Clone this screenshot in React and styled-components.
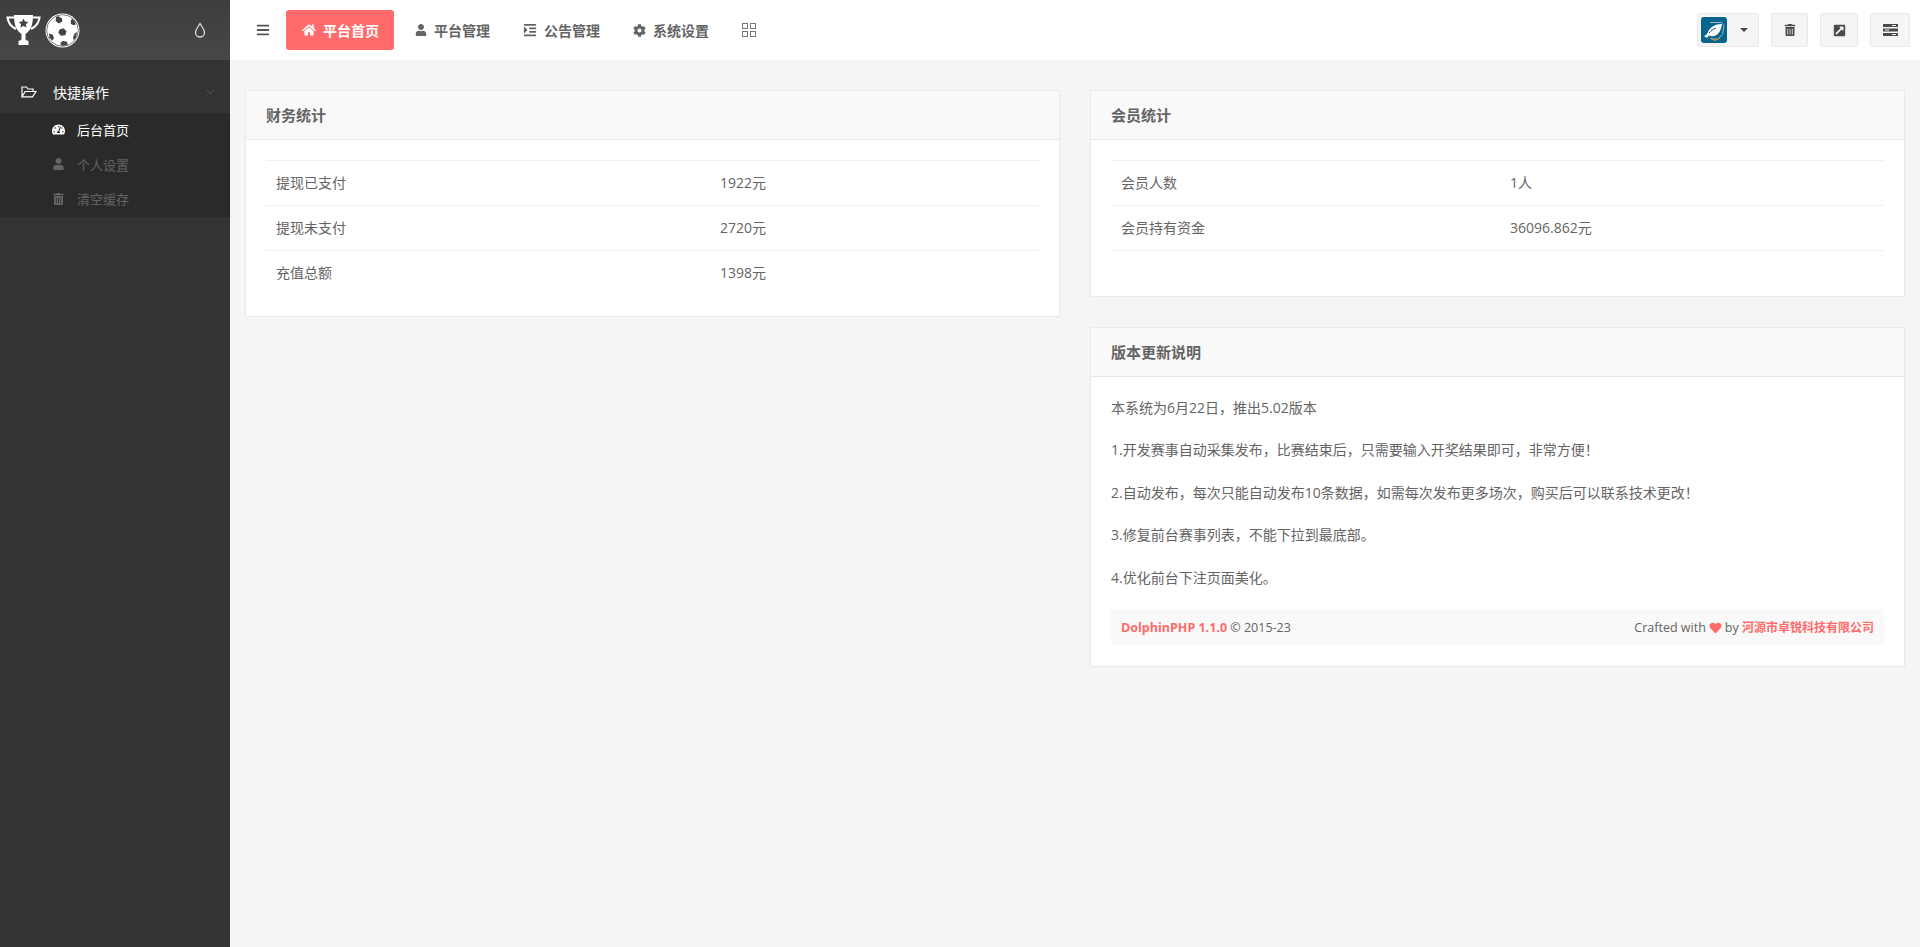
import React from "react";
import styled, { createGlobalStyle } from "styled-components";
import {
  FaBars,
  FaCog,
  FaExternalLinkSquareAlt,
  FaHeart,
  FaHome,
  FaIndent,
  FaTachometerAlt,
  FaTrashAlt,
  FaUser,
} from "react-icons/fa";

const GlobalStyle = createGlobalStyle`
  html, body {
    margin: 0;
    padding: 0;
    height: 100%;
    background: #f5f5f5;
    color: #646464;
    font-family: "Open Sans", "Noto Sans CJK SC", sans-serif;
    font-size: 14px;
  }
  * { box-sizing: border-box; }
`;

const Page = styled.div`
  display: flex;
  min-height: 947px;
`;

const Sidebar = styled.aside`
  width: 230px;
  flex-shrink: 0;
  background: #333333;
`;

const Brand = styled.div`
  display: flex;
  align-items: center;
  justify-content: space-between;
  height: 60px;
  padding: 0 23px 0 6px;
  background: linear-gradient(to bottom, #3e3e3e, #474747);
`;

const Logo = styled.div`
  display: flex;
  align-items: center;
  gap: 4px;
`;

const MenuHead = styled.div`
  display: flex;
  align-items: center;
  height: 53px;
  padding: 10px 15px 0 21px;
  color: #ffffff;
  font-size: 14px;
  svg:first-child {
    margin-right: 16px;
  }
`;

const MenuText = styled.span`
  flex: 1;
`;

const SubMenu = styled.div`
  background: #2a2a2a;
`;

const SubItem = styled.div`
  display: flex;
  align-items: center;
  height: 34.7px;
  padding-left: 52px;
  padding-bottom: 2px;
  font-size: 13px;
  color: ${(props) => (props.active ? "#ffffff" : "#646464")};
  svg {
    width: 13px;
    margin-right: 12px;
  }
`;

const Main = styled.div`
  flex: 1;
  min-width: 0;
`;

const Header = styled.header`
  display: flex;
  align-items: center;
  justify-content: space-between;
  height: 60px;
  padding: 0 10px 0 26px;
  background: #ffffff;
`;

const Nav = styled.nav`
  display: flex;
  align-items: center;
`;

const NavItem = styled.div`
  display: flex;
  align-items: center;
  gap: 7px;
  height: 40px;
  padding: 0 15px 0 ${(props) => (props.active ? "16px" : "15px")};
  margin-right: ${(props) => (props.active ? "6px" : "3px")};
  border-radius: 3px;
  background: ${(props) => (props.active ? "#ff6b6b" : "transparent")};
  color: ${(props) => (props.active ? "#ffffff" : "#646464")};
  font-weight: 700;
  font-size: 14px;
`;

const Burger = styled.div`
  display: flex;
  width: 30px;
  color: #555555;
`;

const GridButton = styled.div`
  display: flex;
  margin-left: 15px;
`;

const Tools = styled.div`
  display: flex;
  align-items: center;
  gap: 12px;
`;

const ToolButton = styled.div`
  display: flex;
  align-items: center;
  justify-content: ${(props) => (props.split ? "flex-start" : "center")};
  gap: 13px;
  width: ${(props) => props.w}px;
  height: 34px;
  padding: ${(props) => (props.split ? "0 0 0 3px" : "0")};
  background: #f5f5f5;
  border: 1px solid #e9e9e9;
  border-radius: 2px;
  color: #4a4a4a;
`;

const Caret = styled.span`
  width: 0;
  height: 0;
  border-top: 4px solid #4a4a4a;
  border-left: 4px solid transparent;
  border-right: 4px solid transparent;
`;

const Content = styled.main`
  display: grid;
  grid-template-columns: 815px 815px;
  gap: 30px;
  align-items: start;
  padding: 30px 15px;
`;

const Column = styled.div`
  display: flex;
  flex-direction: column;
  gap: 30px;
`;

const Card = styled.section`
  background: #ffffff;
  border: 1px solid #e9e9e9;
`;

const CardHead = styled.h3`
  display: flex;
  align-items: center;
  height: 49px;
  margin: 0;
  padding: 0 20px 2px;
  background: #f9f9f9;
  border-bottom: 1px solid #e9e9e9;
  color: #646464;
  font-size: 15px;
  font-weight: 700;
`;

const CardBody = styled.div`
  padding: 20px 20px 21px;
`;

const Row = styled.div`
  display: grid;
  grid-template-columns: ${(props) => props.first}px 1fr;
  align-items: center;
  height: ${(props) => (props.empty ? "25px" : "45px")};
  padding: 0 10px 2px;
  border-top: 1px solid #f0f0f0;
`;

const Para = styled.p`
  margin: 0 0 20px;
  line-height: 22.4px;
  font-size: 14px;
`;

const Footer = styled.footer`
  display: flex;
  align-items: center;
  justify-content: space-between;
  height: 36px;
  padding: 0 10px;
  background: #f9f9f9;
  font-size: 12.5px;
`;

const Red = styled.a`
  color: #ff6b6b;
  font-weight: 700;
`;

const Company = styled(Red)`
  font-size: 12px;
`;

const Love = styled(FaHeart)`
  width: 13px;
  height: 12px;
  margin: 0 3px;
  color: #ff6b6b;
  vertical-align: -2px;
`;

const Trophy = () => (
  <svg width="35" height="32" viewBox="0 0 35 32" fill="#fff">
    <path
      d="M8 3.500H1.500C2 8 5 12.500 10 15M27 3.500h6.500C33 8 30 12.500 25 15"
      fill="none"
      stroke="#fff"
      strokeWidth="2.200"
    />
    <path d="M8 1h19c0 7-1 15-7.500 19v5c0 1 1.500 1.500 3 2v4h-10v-4c1.500-.5 3-1 3-2v-5C9 16 8 8 8 1z" />
    <path
      fill="#444"
      d="M17.500 4.500l1.500 3 3.300.4-2.400 2.300.6 3.300-3-1.600-3 1.600.6-3.300-2.400-2.300 3.300-.4z"
    />
  </svg>
);

const Ball = () => (
  <svg width="35" height="35" viewBox="0 0 35 35">
    <circle cx="17.500" cy="17.500" r="17" fill="#fff" />
    <circle cx="17.500" cy="17.500" r="15.800" fill="none" stroke="#444" strokeWidth=".7" />
    <g fill="#444">
      <path d="M13 3l4 2.500.3 3-3.500 2-3.200-2.500.4-4z" />
      <path d="M27 5.500l3 3 .8 3-2.300.8-2.800-1.600.4-3.500z" />
      <path d="M14.500 16.500l4-1.200 3 3-1.200 4-4.500.4-2.500-3.200z" />
      <path d="M30 20l2-.8-.8 4.800-2.400 3.500-.8-3.200z" />
      <path d="M4 20.500l3.800 1.200 1.200 3.800-2 2-2.600-3.300z" />
      <path d="M17.500 28l4 .4 1.600 3.200-4 1.200-3.200-.4-.4-2.400z" />
    </g>
  </svg>
);

const Drop = () => (
  <svg width="14" height="16" viewBox="0 0 14 16" fill="none" stroke="#ddd" strokeWidth="1.300">
    <path d="M7 1.500C5.500 4.500 2.500 7.500 2.500 10.500a4.500 4.500 0 0 0 9 0C11.500 7.500 8.500 4.500 7 1.500z" />
  </svg>
);

const FolderOpen = () => (
  <svg width="16" height="12" viewBox="0 0 16 12" fill="none" stroke="#fff" strokeWidth="1.200">
    <path d="M1 10.800V1h4.500l1.500 2h5v2.500M1 10.800h10.500L15 5.500H4.200L1 10.800z" />
  </svg>
);

const Chevron = () => (
  <svg width="9" height="6" viewBox="0 0 9 6" fill="none" stroke="#555" strokeWidth="1">
    <path d="M.5.8l4 4 4-4" />
  </svg>
);

const GridIcon = () => (
  <svg width="14" height="14" viewBox="0 0 14 14" fill="none" stroke="#777" strokeWidth="1">
    <rect x=".5" y=".5" width="5" height="5" />
    <rect x="8.500" y=".5" width="5" height="5" />
    <rect x=".5" y="8.500" width="5" height="5" />
    <rect x="8.500" y="8.500" width="5" height="5" />
  </svg>
);

const Avatar = () => (
  <svg width="26" height="26" viewBox="0 0 26 26">
    <rect width="26" height="26" rx="3" fill="#07648c" />
    <path d="M9 5.500h11.500l2.500 3-1.500 9-5 4.500h-6" fill="none" stroke="#9fb4bf" strokeWidth="1" />
    <path d="M9 21l5 2.500 5-2.500" fill="none" stroke="#d8953a" strokeWidth="1" />
    <path d="M3 19c2-.5 3-2 4-4 2-5 7-8 14-8-1 6-3 11-8 12-2 .5-3 0-5-.5l-2 2.500z" fill="#fff" />
    <path d="M8 16c2-2 4-4 7-5" fill="none" stroke="#07648c" strokeWidth="1" />
  </svg>
);

const Tasks = () => (
  <svg width="15" height="12" viewBox="0 0 15 12" fill="#4a4a4a">
    <rect width="15" height="3" />
    <rect y="4.500" width="15" height="3" />
    <rect y="9" width="15" height="3" />
    <rect x="9" y="1" width="4" height="1" fill="#f5f5f5" />
    <rect x="2" y="5.500" width="4" height="1" fill="#f5f5f5" />
    <rect x="9" y="10" width="4" height="1" fill="#f5f5f5" />
  </svg>
);

const App = () => {
  return (
    <Page>
      <GlobalStyle />
      <Sidebar>
        <Brand>
          <Logo>
            <Trophy />
            <Ball />
          </Logo>
          <Drop />
        </Brand>
        <MenuHead>
          <FolderOpen />
          <MenuText>快捷操作</MenuText>
          <Chevron />
        </MenuHead>
        <SubMenu>
          <SubItem active>
            <FaTachometerAlt size={13} />
            后台首页
          </SubItem>
          <SubItem>
            <FaUser size={12} />
            个人设置
          </SubItem>
          <SubItem>
            <FaTrashAlt size={12} />
            清空缓存
          </SubItem>
        </SubMenu>
      </Sidebar>
      <Main>
        <Header>
          <Nav>
            <Burger>
              <FaBars size={14} />
            </Burger>
            <NavItem active>
              <FaHome size={14} />
              平台首页
            </NavItem>
            <NavItem>
              <FaUser size={12} />
              平台管理
            </NavItem>
            <NavItem>
              <FaIndent size={14} />
              公告管理
            </NavItem>
            <NavItem>
              <FaCog size={13} />
              系统设置
            </NavItem>
            <GridButton>
              <GridIcon />
            </GridButton>
          </Nav>
          <Tools>
            <ToolButton w={62} split>
              <Avatar />
              <Caret />
            </ToolButton>
            <ToolButton w={37}>
              <FaTrashAlt size={12} />
            </ToolButton>
            <ToolButton w={38}>
              <FaExternalLinkSquareAlt size={13} />
            </ToolButton>
            <ToolButton w={40}>
              <Tasks />
            </ToolButton>
          </Tools>
        </Header>
        <Content>
          <Column>
            <Card>
              <CardHead>财务统计</CardHead>
              <CardBody>
                <Row first={444}>
                  <span>提现已支付</span>
                  <span>1922元</span>
                </Row>
                <Row first={444}>
                  <span>提现未支付</span>
                  <span>2720元</span>
                </Row>
                <Row first={444}>
                  <span>充值总额</span>
                  <span>1398元</span>
                </Row>
              </CardBody>
            </Card>
          </Column>
          <Column>
            <Card>
              <CardHead>会员统计</CardHead>
              <CardBody>
                <Row first={389}>
                  <span>会员人数</span>
                  <span>1人</span>
                </Row>
                <Row first={389}>
                  <span>会员持有资金</span>
                  <span>36096.862元</span>
                </Row>
                <Row first={389} empty />
              </CardBody>
            </Card>
            <Card>
              <CardHead>版本更新说明</CardHead>
              <CardBody>
                <Para>本系统为6月22日，推出5.02版本</Para>
                <Para>1.开发赛事自动采集发布，比赛结束后，只需要输入开奖结果即可，非常方便！</Para>
                <Para>2.自动发布，每次只能自动发布10条数据，如需每次发布更多场次，购买后可以联系技术更改！</Para>
                <Para>3.修复前台赛事列表，不能下拉到最底部。</Para>
                <Para>4.优化前台下注页面美化。</Para>
                <Footer>
                  <span>
                    <Red>DolphinPHP 1.1.0</Red> © 2015-23
                  </span>
                  <span>
                    Crafted with
                    <Love />
                    by <Company>河源市卓锐科技有限公司</Company>
                  </span>
                </Footer>
              </CardBody>
            </Card>
          </Column>
        </Content>
      </Main>
    </Page>
  );
};

export default App;
